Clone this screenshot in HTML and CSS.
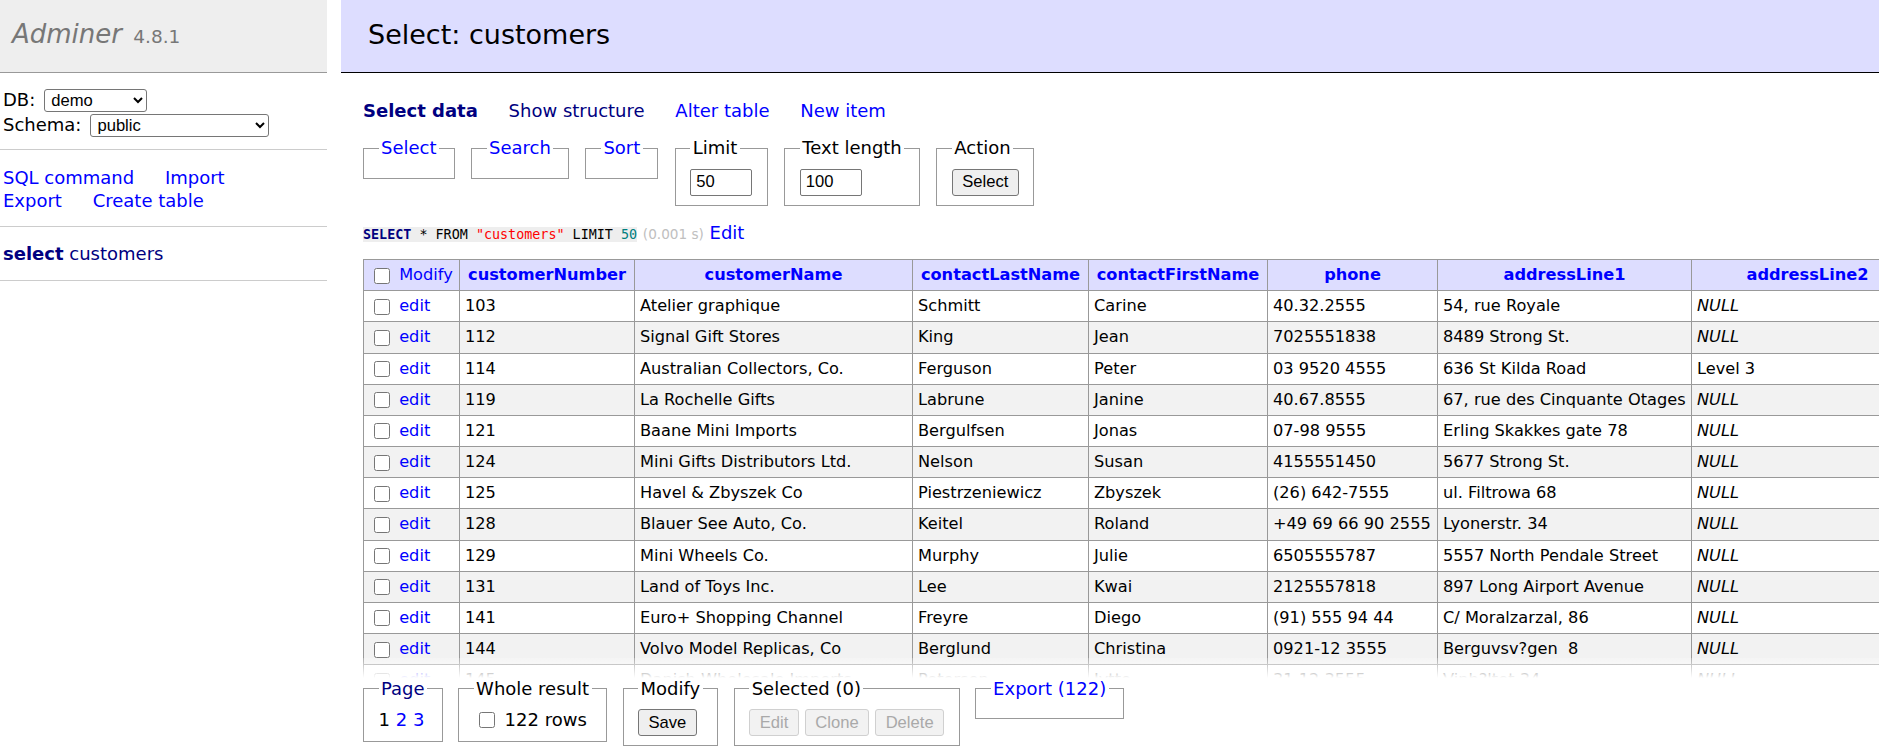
FILE: index.html
```html
<!DOCTYPE html>
<html lang="en">
<head>
<meta charset="utf-8">
<title>Select: customers - demo - Adminer</title>
<link rel="stylesheet" href="styles.css">
</head>
<body>
<div class="page">
  <aside class="menu">
    <h1 class="brand"><a class="brand-name" href="#">Adminer</a> <span class="version">4.8.1</span></h1>
    <form class="dbs">
      <div class="dbs-row">DB: <select class="sel sel-db"><option>demo</option></select></div>
      <div class="dbs-row">Schema: <select class="sel sel-ns"><option>public</option></select></div>
    </form>
    <p class="menu-links"><a href="#">SQL command</a> <a href="#">Import</a> <a href="#">Export</a> <a href="#">Create table</a></p>
    <ul class="tables"><li><a class="visited active" href="#">select</a> <a class="visited" href="#">customers</a></li></ul>
  </aside>

  <main class="content">
    <h2 class="title">Select: customers</h2>
    <p class="links"><a class="visited active" href="#">Select data</a> <a class="visited" href="#">Show structure</a> <a href="#">Alter table</a> <a href="#">New item</a></p>

    <form class="select-form">
      <div class="fieldsets">
        <fieldset class="fs"><legend><a href="#">Select</a></legend></fieldset>
        <fieldset class="fs"><legend><a href="#">Search</a></legend></fieldset>
        <fieldset class="fs"><legend><a href="#">Sort</a></legend></fieldset>
        <fieldset class="fs"><legend>Limit</legend><div class="fs-body"><input class="num" type="text" value="50"></div></fieldset>
        <fieldset class="fs"><legend>Text length</legend><div class="fs-body"><input class="num" type="text" value="100"></div></fieldset>
        <fieldset class="fs"><legend>Action</legend><div class="fs-body"><button class="btn btn-select" type="button">Select</button></div></fieldset>
      </div>

      <p class="query"><code class="sql"><b class="kw">SELECT</b> * FROM <span class="ident">"customers"</span> LIMIT <span class="numlit">50</span></code> <span class="time">(0.001 s)</span> <a href="#">Edit</a></p>

      <div class="table-wrap">
        <table class="grid">
          <colgroup>
            <col class="w-sel"><col class="w-num"><col class="w-name"><col class="w-last"><col class="w-first"><col class="w-phone"><col class="w-addr1"><col class="w-addr2">
          </colgroup>
          <thead>
            <tr>
              <td><input class="chk" type="checkbox"> <a href="#">Modify</a></td>
              <th><a href="#">customerNumber</a></th>
              <th><a href="#">customerName</a></th>
              <th><a href="#">contactLastName</a></th>
              <th><a href="#">contactFirstName</a></th>
              <th><a href="#">phone</a></th>
              <th><a href="#">addressLine1</a></th>
              <th><a href="#">addressLine2</a></th>
            </tr>
          </thead>
          <tbody>
            <tr><td><input class="chk" type="checkbox"> <a href="#">edit</a></td><td>103</td><td>Atelier graphique</td><td>Schmitt</td><td>Carine</td><td>40.32.2555</td><td>54, rue Royale</td><td><i>NULL</i></td></tr>
            <tr><td><input class="chk" type="checkbox"> <a href="#">edit</a></td><td>112</td><td>Signal Gift Stores</td><td>King</td><td>Jean</td><td>7025551838</td><td>8489 Strong St.</td><td><i>NULL</i></td></tr>
            <tr><td><input class="chk" type="checkbox"> <a href="#">edit</a></td><td>114</td><td>Australian Collectors, Co.</td><td>Ferguson</td><td>Peter</td><td>03 9520 4555</td><td>636 St Kilda Road</td><td>Level 3</td></tr>
            <tr><td><input class="chk" type="checkbox"> <a href="#">edit</a></td><td>119</td><td>La Rochelle Gifts</td><td>Labrune</td><td>Janine</td><td>40.67.8555</td><td>67, rue des Cinquante Otages</td><td><i>NULL</i></td></tr>
            <tr><td><input class="chk" type="checkbox"> <a href="#">edit</a></td><td>121</td><td>Baane Mini Imports</td><td>Bergulfsen</td><td>Jonas</td><td>07-98 9555</td><td>Erling Skakkes gate 78</td><td><i>NULL</i></td></tr>
            <tr><td><input class="chk" type="checkbox"> <a href="#">edit</a></td><td>124</td><td>Mini Gifts Distributors Ltd.</td><td>Nelson</td><td>Susan</td><td>4155551450</td><td>5677 Strong St.</td><td><i>NULL</i></td></tr>
            <tr><td><input class="chk" type="checkbox"> <a href="#">edit</a></td><td>125</td><td>Havel &amp; Zbyszek Co</td><td>Piestrzeniewicz</td><td>Zbyszek</td><td>(26) 642-7555</td><td>ul. Filtrowa 68</td><td><i>NULL</i></td></tr>
            <tr><td><input class="chk" type="checkbox"> <a href="#">edit</a></td><td>128</td><td>Blauer See Auto, Co.</td><td>Keitel</td><td>Roland</td><td>+49 69 66 90 2555</td><td>Lyonerstr. 34</td><td><i>NULL</i></td></tr>
            <tr><td><input class="chk" type="checkbox"> <a href="#">edit</a></td><td>129</td><td>Mini Wheels Co.</td><td>Murphy</td><td>Julie</td><td>6505555787</td><td>5557 North Pendale Street</td><td><i>NULL</i></td></tr>
            <tr><td><input class="chk" type="checkbox"> <a href="#">edit</a></td><td>131</td><td>Land of Toys Inc.</td><td>Lee</td><td>Kwai</td><td>2125557818</td><td>897 Long Airport Avenue</td><td><i>NULL</i></td></tr>
            <tr><td><input class="chk" type="checkbox"> <a href="#">edit</a></td><td>141</td><td>Euro+ Shopping Channel</td><td>Freyre</td><td>Diego</td><td>(91) 555 94 44</td><td>C/ Moralzarzal, 86</td><td><i>NULL</i></td></tr>
            <tr><td><input class="chk" type="checkbox"> <a href="#">edit</a></td><td>144</td><td>Volvo Model Replicas, Co</td><td>Berglund</td><td>Christina</td><td>0921-12 3555</td><td>Berguvsv?gen  8</td><td><i>NULL</i></td></tr>
            <tr><td><input class="chk" type="checkbox"> <a href="#">edit</a></td><td>145</td><td>Danish Wholesale Imports</td><td>Petersen</td><td>Jytte</td><td>31 12 3555</td><td>Vinb?ltet 34</td><td><i>NULL</i></td></tr>
            <tr><td><input class="chk" type="checkbox"> <a href="#">edit</a></td><td>146</td><td>Saveley &amp; Henriot, Co.</td><td>Saveley</td><td>Mary</td><td>78.32.5555</td><td>2, rue du Commerce</td><td><i>NULL</i></td></tr>
          </tbody>
        </table>
      </div>

      <div class="footer">
        <div class="footer-row">
          <fieldset class="fs"><legend><a class="visited" href="#">Page</a></legend>1 <a href="#">2</a> <a href="#">3</a></fieldset>
          <fieldset class="fs"><legend>Whole result</legend><label class="fs-body"><input class="chk" type="checkbox">122 rows</label></fieldset>
          <fieldset class="fs"><legend>Modify</legend><div class="fs-body"><button class="btn" type="button">Save</button></div></fieldset>
          <fieldset class="fs"><legend>Selected (0)</legend><div class="fs-body"><button class="btn" type="button" disabled>Edit</button><button class="btn" type="button" disabled>Clone</button><button class="btn" type="button" disabled>Delete</button></div></fieldset>
          <fieldset class="fs fs-empty"><legend><a href="#">Export</a> <a href="#">(122)</a></legend></fieldset>
        </div>
      </div>
    </form>
  </main>
</div>
</body>
</html>
```

FILE: styles.css
```css
html, body {
  margin: 0;
  height: 100%;
  overflow: hidden;
}

body {
  font-family: "DejaVu Sans", Verdana, sans-serif;
  font-size: 18px;
  line-height: 22.5px;
  color: #000;
  background: #fff;
}

a {
  color: blue;
  text-decoration: none;
}

a.visited {
  color: navy;
}

.active {
  font-weight: bold;
}

.page {
  display: flex;
  height: 100vh;
}

/* ---------- side menu ---------- */
.menu {
  flex: none;
  width: 327px;
}

.brand {
  margin: 0;
  box-sizing: border-box;
  height: 73px;
  padding: 18px 0 0 12px;
  font-size: 26px;
  line-height: 32px;
  font-weight: normal;
  color: #777;
  background: #eee;
  border-bottom: 1px solid #999;
}

.brand-name {
  color: #777;
  font-style: italic;
}

.version {
  margin-left: 3px;
  font-size: 18.5px;
  color: #777;
}

.dbs {
  margin: 0;
  padding: 15px 18px 12px 3px;
  border-bottom: 1px solid #ccc;
}

.dbs-row {
  display: flex;
  align-items: center;
  gap: 9px;
  height: 24px;
}

.dbs-row + .dbs-row {
  margin-top: 1px;
}

.sel {
  font-family: "Liberation Sans", Arial, sans-serif;
  font-size: 16.6px;
  height: 23px;
  padding: 0 0 0 2px;
  border: 1px solid #767676;
  border-radius: 3px;
  background: #fff;
  color: #000;
}

.sel-db { width: 103px; }
.sel-ns { width: 179px; }

.menu-links {
  margin: 0;
  padding: 17px 18px 14px 3px;
  border-bottom: 1px solid #ccc;
}

.menu-links a,
.links a {
  margin-right: 25px;
  white-space: nowrap;
}

.tables {
  margin: 0;
  padding: 16px 18px 14px 3px;
  list-style: none;
  border-bottom: 1px solid #ccc;
  white-space: nowrap;
}

/* ---------- content ---------- */
.content {
  flex: 1;
  min-width: 0;
  margin-left: 36px;
  display: flex;
  flex-direction: column;
}

.title {
  margin: 0 0 0 -22px;
  padding: 18px 27px 20px;
  font-size: 27px;
  line-height: 34px;
  font-weight: normal;
  color: #000;
  background: #ddf;
  border-bottom: 1px solid #000;
}

.links {
  margin: 27px 0 0;
}

.select-form {
  flex: 1;
  min-height: 0;
  display: flex;
  flex-direction: column;
}

.fieldsets,
.footer-row {
  display: flex;
  align-items: flex-start;
  gap: 16.5px;
}

.footer-row {
  gap: 15.5px;
}

.fieldsets {
  margin-top: 14.5px;
}

.fs {
  margin: 0;
  padding: 9px 14.5px;
  border: 1px solid #999;
  min-width: 0;
}

.fs legend {
  padding: 0 2.5px;
}

.fs-body {
  display: flex;
  align-items: center;
  gap: 6px;
}

.num {
  box-sizing: border-box;
  width: 62px;
  height: 27px;
  padding: 1px 5px;
  font-family: "Liberation Sans", Arial, sans-serif;
  font-size: 16.6px;
  border: 1px solid #767676;
  border-radius: 2px;
  color: #000;
  background: #fff;
}

.btn {
  box-sizing: border-box;
  height: 27px;
  padding: 0 9.5px;
  font-family: "Liberation Sans", Arial, sans-serif;
  font-size: 16.6px;
  color: #000;
  background: #efefef;
  border: 1px solid #767676;
  border-radius: 3px;
}

.btn:disabled {
  color: #a9a9a9;
  background: #f2f2f2;
  border-color: #d0d0d0;
}

.query {
  margin: 16px 0 0;
  white-space: nowrap;
}

.sql {
  font-family: "DejaVu Sans Mono", "Liberation Mono", monospace;
  font-size: 13.4px;
  background: #eee;
  color: #000;
}

.kw {
  color: navy;
}

.ident {
  color: red;
}

.numlit {
  color: #007f7f;
}

.time {
  color: silver;
  font-size: 13.6px;
}

/* ---------- data grid ---------- */
.table-wrap {
  flex: 1;
  min-height: 0;
  overflow: hidden;
  margin-top: 13px;
}

.grid {
  border-collapse: collapse;
  table-layout: fixed;
  width: 1560px;
  font-size: 16.2px;
  line-height: 24.17px;
}

.w-sel { width: 96px; }
.w-num { width: 175px; }
.w-name { width: 278px; }
.w-last { width: 176px; }
.w-first { width: 179px; }
.w-phone { width: 170px; }
.w-addr1 { width: 254px; }
.w-addr2 { width: 232px; }

.grid td,
.grid th {
  border: 1px solid #999;
  padding: 3px 5px;
  white-space: pre;
  overflow: hidden;
  text-align: left;
}

.grid thead td,
.grid thead th {
  background: #ddf;
}

.grid thead th {
  text-align: center;
  font-weight: bold;
}

.grid tbody tr:nth-child(2n) {
  background: #f2f2f2;
}

.chk {
  width: 16px;
  height: 16px;
  margin: 0 4px 0 5px;
  vertical-align: middle;
}

/* ---------- sticky footer ---------- */
.footer {
  flex: none;
  position: relative;
  background: #fff;
  padding-bottom: 3px;
}

.footer::before {
  content: "";
  position: absolute;
  left: 0;
  right: 0;
  top: -20px;
  height: 20px;
  background: linear-gradient(rgba(255, 255, 255, 0.2), #fff);
}

.fs-empty {
  padding-bottom: 9px;
}
```
